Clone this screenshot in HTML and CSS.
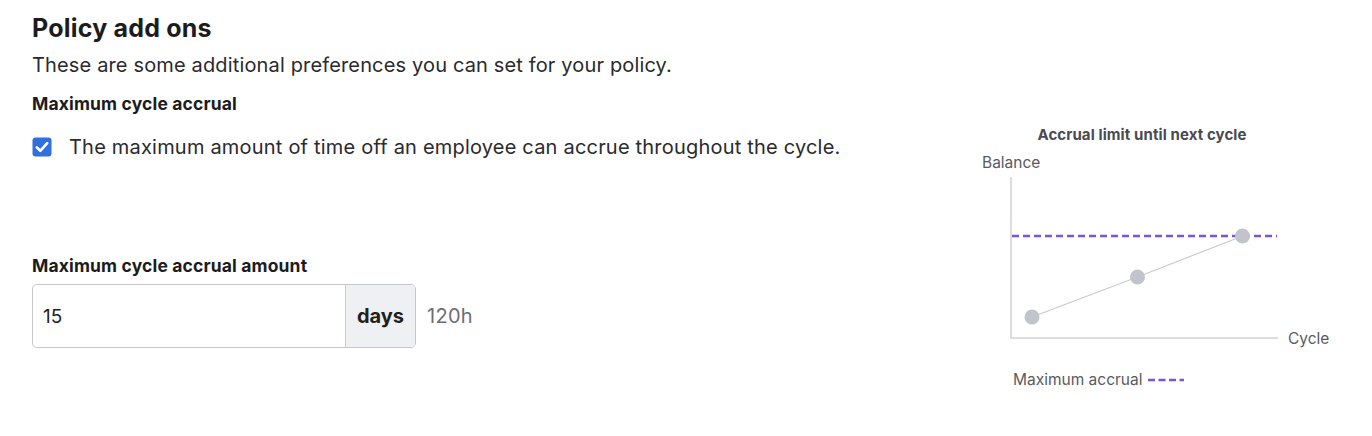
FILE: index.html
```html
<!DOCTYPE html>
<html lang="en">
<head>
<meta charset="utf-8">
<title>Policy add ons</title>
<link rel="stylesheet" href="styles.css">
</head>
<body>
<main class="page">
  <section class="settings">
    <h1 class="title">Policy add ons</h1>
    <p class="subtitle">These are some additional preferences you can set for your policy.</p>
    <h2 class="label">Maximum cycle accrual</h2>
    <label class="check-row">
      <span class="checkbox" aria-hidden="true">
        <svg viewBox="0 0 20 20" width="20" height="20">
          <rect x="0.5" y="0.5" width="19" height="19" rx="3" fill="#2f6fde"/>
          <path d="M4.8 10.4 L8.3 13.8 L15.2 6.2" fill="none" stroke="#fff" stroke-width="2.6" stroke-linecap="round" stroke-linejoin="round"/>
        </svg>
      </span>
      <span class="check-text">The maximum amount of time off an employee can accrue throughout the cycle.</span>
    </label>
    <h2 class="label amount-label">Maximum cycle accrual amount</h2>
    <div class="amount-row">
      <div class="input-group">
        <span class="input-value">15</span>
        <span class="input-addon">days</span>
      </div>
      <span class="hours">120h</span>
    </div>
  </section>

  <aside class="chart">
    <div class="chart-title">Accrual limit until next cycle</div>
    <svg class="plot" viewBox="0 0 360 200" width="360" height="200">
      <text x="0" y="18" class="axis-text">Balance</text>
      <line x1="29" y1="27" x2="29" y2="189" stroke="#dcdce1" stroke-width="2"/>
      <line x1="28" y1="188" x2="296" y2="188" stroke="#dcdce1" stroke-width="2"/>
      <line x1="30" y1="86" x2="295" y2="86" stroke="#7556df" stroke-width="2.4" stroke-dasharray="7 4"/>
      <polyline points="50,167 155.5,127 260.5,86" fill="none" stroke="#c9cacf" stroke-width="1.2"/>
      <circle cx="50" cy="167" r="7.5" fill="#c1c4cb"/>
      <circle cx="155.5" cy="127" r="7.5" fill="#c1c4cb"/>
      <circle cx="260.5" cy="86" r="7.5" fill="#c1c4cb"/>
      <text x="306" y="194" class="axis-text">Cycle</text>
    </svg>
    <div class="legend">
      <span>Maximum accrual</span>
      <svg width="36" height="4" viewBox="0 0 36 4"><line x1="0" y1="2" x2="36" y2="2" stroke="#7556df" stroke-width="2.4" stroke-dasharray="7 3.5"/></svg>
    </div>
  </aside>
</main>
</body>
</html>
```

FILE: styles.css
```css
* {
  box-sizing: border-box;
}

body {
  margin: 0;
  background: #ffffff;
  font-family: "Inter", "Liberation Sans", sans-serif;
  color: #1f1f21;
}

.page {
  display: flex;
  justify-content: space-between;
  padding: 12px 0 0 32px;
}

.settings {
  display: flex;
  flex-direction: column;
  width: 880px;
}

.title {
  margin: 0;
  font-size: 25px;
  line-height: 32px;
  font-weight: 700;
  letter-spacing: 0.2px;
  color: #1c1c1e;
}

.subtitle {
  margin: 7px 0 0;
  font-size: 20px;
  line-height: 28px;
  letter-spacing: 0.15px;
  color: #2a2a2c;
}

.label {
  margin: 13px 0 0;
  font-size: 17.5px;
  line-height: 24px;
  font-weight: 700;
  letter-spacing: 0.15px;
  color: #1c1c1e;
}

.check-row {
  display: flex;
  align-items: center;
  gap: 17px;
  margin-top: 17px;
}

.checkbox {
  display: flex;
  width: 20px;
  height: 20px;
}

.check-text {
  font-size: 20px;
  line-height: 28px;
  letter-spacing: 0.2px;
  color: #2a2a2c;
}

.amount-label {
  margin-top: 93px;
}

.amount-row {
  display: flex;
  align-items: center;
  gap: 11px;
  margin-top: 6px;
}

.input-group {
  display: flex;
  width: 384px;
  height: 64px;
  border: 1px solid #c6c7cd;
  border-radius: 5px;
  overflow: hidden;
}

.input-value {
  flex: 1;
  display: flex;
  align-items: center;
  padding-left: 10px;
  font-size: 19px;
  color: #1f1f21;
}

.input-addon {
  display: flex;
  align-items: center;
  padding: 0 11px;
  background: #eff0f3;
  border-left: 1px solid #c6c7cd;
  font-size: 20px;
  font-weight: 700;
  color: #1f1f21;
}

.hours {
  font-size: 20px;
  letter-spacing: 0.3px;
  color: #6d6d72;
}

.chart {
  display: flex;
  flex-direction: column;
  width: 390px;
  padding-top: 114px;
}

.chart-title {
  width: 320px;
  text-align: center;
  font-size: 15px;
  line-height: 18px;
  font-weight: 700;
  letter-spacing: 0.1px;
  color: #4a4a50;
}

.plot {
  display: block;
  margin-top: 6px;
  overflow: visible;
}

.axis-text {
  font-family: "Inter", "Liberation Sans", sans-serif;
  font-size: 15.5px;
  fill: #5a5a60;
}

.legend {
  display: flex;
  align-items: center;
  gap: 6px;
  margin-top: 20px;
  padding-left: 31px;
  font-size: 15.5px;
  line-height: 20px;
  color: #5a5a60;
}
```
